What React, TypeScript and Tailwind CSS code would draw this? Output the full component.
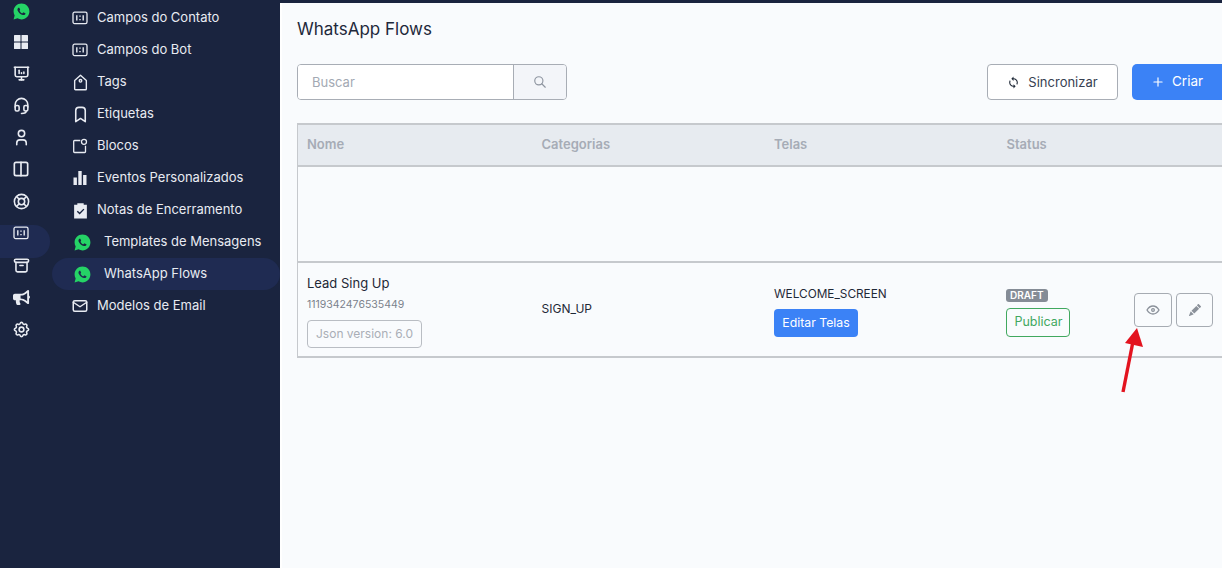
import React from "react";
import { RiWhatsappFill } from "react-icons/ri";
import { TbUser, TbLifebuoy, TbSettings, TbArchive, TbHeadset, TbPresentationAnalytics, TbMail, TbBookmark, TbSearch, TbPlus, TbEye, TbLayoutColumns } from "react-icons/tb";
import { FaBullhorn } from "react-icons/fa";
import { BsPencilFill } from "react-icons/bs";
import { MdLoop } from "react-icons/md";

const FieldsIcon = ({ size = 16 }: { size?: number }) => (
  <svg width={size} height={size} viewBox="0 0 16 16" fill="none" stroke="currentColor" strokeWidth="1.3">
    <rect x="1" y="2.2" width="14" height="11.4" rx="1.6" />
    <path d="M4.8 5.2v5.4M11.2 5.2v5.4" strokeWidth="1.4" />
    <path d="M8 5.6v1.2M8 9v1.2" strokeWidth="1.4" />
  </svg>
);
const TagIcon = () => (
  <svg width="17" height="17" viewBox="0 0 16 16" fill="none" stroke="currentColor" strokeWidth="1.3">
    <path d="M2.5 6.200 8 1.200l5.500 5V14a.8.8 0 0 1-.8.8H3.300a.8.8 0 0 1-.8-.8z" strokeLinejoin="round" />
    <circle cx="8" cy="6.400" r="1.200" />
  </svg>
);
const BlockIcon = () => (
  <svg width="16" height="16" viewBox="0 0 16 16" fill="none" stroke="currentColor" strokeWidth="1.3">
    <path d="M8.300 2.500H2.500a.8.8 0 0 0-.8.8v10.400a.8.8 0 0 0 .8.8h10.200a.8.8 0 0 0 .8-.8V7.800" />
    <circle cx="12" cy="3.800" r="2.500" />
  </svg>
);
const GridIcon = () => (
  <svg width="16" height="16" viewBox="0 0 16 16" fill="currentColor">
    <rect x="1" y="1" width="6.500" height="6.500" rx=".5" />
    <rect x="8.500" y="1" width="6.500" height="6.500" rx=".5" />
    <rect x="1" y="8.500" width="6.500" height="6.500" rx=".5" />
    <rect x="8.500" y="8.500" width="6.500" height="6.500" rx=".5" />
  </svg>
);
const BarsIcon = () => (
  <svg width="16" height="16" viewBox="0 0 16 16" fill="currentColor">
    <rect x="1.500" y="7.500" width="3.400" height="7.500" />
    <rect x="6.300" y="1" width="3.400" height="14" />
    <rect x="11.100" y="5" width="3.400" height="10" />
  </svg>
);
const ClipIcon = () => (
  <svg width="17" height="17" viewBox="0 0 16 16">
    <path d="M2 2.500h3V1.200h6v1.300h3v13H2z" fill="currentColor" />
    <path d="M5 8.700l2.200 2.200 4-4.200" stroke="#18233f" strokeWidth="1.300" fill="none" />
  </svg>
);

const rail = [
  { el: <RiWhatsappFill size={19} className="text-[#25d366]" />, h: "h-[22px] mb-[4px]" },
  { el: <GridIcon />, h: "h-[31px]" },
  { el: <TbPresentationAnalytics size={19} />, h: "h-[32px]" },
  { el: <TbHeadset size={19} />, h: "h-[32px]" },
  { el: <TbUser size={19} />, h: "h-[32px]" },
  { el: <TbLayoutColumns size={20} />, h: "h-[32px]" },
  { el: <TbLifebuoy size={19} />, h: "h-[32px]" },
  { el: <FieldsIcon />, h: "h-[32px]" },
  { el: <TbArchive size={19} />, h: "h-[32px]" },
  { el: <FaBullhorn size={17} />, h: "h-[32px]" },
  { el: <TbSettings size={19} />, h: "h-[32px]" },
];

const menu = [
  { icon: <FieldsIcon />, label: "Campos do Contato" },
  { icon: <FieldsIcon />, label: "Campos do Bot" },
  { icon: <TagIcon />, label: "Tags" },
  { icon: <TbBookmark size={19} />, label: "Etiquetas" },
  { icon: <BlockIcon />, label: "Blocos" },
  { icon: <BarsIcon />, label: "Eventos Personalizados" },
  { icon: <ClipIcon />, label: "Notas de Encerramento" },
  { icon: <RiWhatsappFill size={19} className="text-[#25d366]" />, label: "Templates de Mensagens", wa: true },
  { icon: <RiWhatsappFill size={19} className="text-[#25d366]" />, label: "WhatsApp Flows", wa: true, active: true },
  { icon: <TbMail size={18} />, label: "Modelos de Email" },
];

export default function App() {
  return (
    <div className="relative flex h-[568px] w-[1222px] overflow-hidden bg-[#f9fbfd] font-['Inter','Noto_Sans',sans-serif]">
      <aside className="flex h-full w-[280px] shrink-0 bg-[#1a243f] text-[#e8ebf2]">
        <nav className="relative flex w-[52px] shrink-0 flex-col">
          <div className="absolute left-0 top-[225px] h-[33px] w-[50px] rounded-r-[16px] bg-[#1f2b52]" />
          {rail.map((r, i) => (
            <div key={i} className={`relative flex w-[42px] shrink-0 items-center justify-center ${r.h}`}>
              {r.el}
            </div>
          ))}
        </nav>
        <ul className="flex flex-1 flex-col pt-[2px]">
          {menu.map((m) => (
            <li
              key={m.label}
              className={`flex h-[32px] items-center rounded-full text-[13px] ${m.active ? "bg-[#1f2b52]" : ""}`}
            >
              <span className={`flex w-[20px] items-center justify-center ${m.wa ? "ml-[20px] mr-[12px]" : "ml-[18px] mr-[7px]"}`}>
                {m.icon}
              </span>
              <span className="whitespace-nowrap pb-[1px] leading-none">{m.label}</span>
            </li>
          ))}
        </ul>
      </aside>
      <div className="h-full w-[2px] shrink-0 bg-[linear-gradient(#1a243f_0,#1a243f_3px,#ffffff_3px)]" />

      <main className="relative flex min-w-0 flex-1 flex-col">
        <div className="h-[3px] w-full shrink-0 bg-[#1a243f]" />
        <div className="flex flex-col pl-[15px]">
          <h1 className="mt-[16px] h-[20px] text-[17px] font-normal leading-[20px] text-[#1e293b]">WhatsApp Flows</h1>

          <div className="mt-[25px] flex h-[36px] items-stretch justify-between">
            <div className="flex w-[270px] overflow-hidden rounded-[4px] border border-[#a8adb5]">
              <div className="flex flex-1 items-center bg-white pl-[14px] pt-[2px] text-[13px] text-[#a3a9b3]">Buscar</div>
              <div className="flex w-[53px] items-center justify-center border-l border-[#a8adb5] bg-[#f3f5f9] text-[#8f96a1]">
                <TbSearch size={14} />
              </div>
            </div>
            <div className="flex gap-[14px]">
              <button className="flex w-[131px] items-center justify-center gap-[8px] rounded-[4px] border border-[#a8adb5] bg-white text-[13px] text-[#374151]">
                <MdLoop size={13} className="text-[#1f2937]" />
                <span className="pt-[2px]">Sincronizar</span>
              </button>
              <button className="flex w-[90px] items-center gap-[7px] rounded-l-[5px] bg-[#3b82f6] pl-[19px] text-[13.500px] text-white">
                <TbPlus size={14} />
                <span className="pb-[1px]">Criar</span>
              </button>
            </div>
          </div>

          <div className="mt-[23px] w-[925px] border-y-2 border-l border-[#c6c9cd]">
            <div className="flex h-[42px] items-center border-b-2 border-[#c6c9cd] bg-[#e7ebf0] pl-[9px] text-[13px] font-semibold text-[#a6acb6]">
              <div className="w-[234.500px]">Nome</div>
              <div className="w-[232.500px]">Categorias</div>
              <div className="w-[232.500px]">Telas</div>
              <div>Status</div>
            </div>
            <div className="h-[96px] border-b-2 border-[#c6c9cd]" />
            <div className="flex h-[93px] items-center pl-[9px] text-[12px] text-[#1f2937]">
              <div className="flex w-[234.500px] flex-col items-start pt-[4px]">
                <div className="text-[13px] leading-[16px]">Lead Sing Up</div>
                <div className="mt-[7px] text-[10.500px] leading-[14px] text-[#7b828c]">1119342476535449</div>
                <div className="mt-[8px] flex h-[28px] w-[115px] items-center justify-center rounded-[4px] border border-[#b9bdc3] text-[12px] text-[#a9aeb6]">
                  Json version: 6.0
                </div>
              </div>
              <div className="w-[232.500px] pb-[2px]">SIGN_UP</div>
              <div className="flex w-[232px] flex-col items-start pt-[5px]">
                <div className="text-[11.800px] leading-[14px]">WELCOME_SCREEN</div>
                <button className="mt-[8px] h-[28px] w-[84px] rounded-[4px] bg-[#3b82f6] text-[12.300px] text-white">Editar Telas</button>
              </div>
              <div className="flex w-[128px] flex-col items-start pt-[7px]">
                <span className="rounded-[3px] bg-[#858c96] px-[4px] text-[10px] font-semibold leading-[13px] text-white">DRAFT</span>
                <button className="mt-[6px] h-[29px] w-[64px] rounded-[4px] border border-[#41a85f] pl-[1px] text-[12.500px] text-[#41a85f]">Publicar</button>
              </div>
              <div className="flex gap-[4px]">
                <button className="flex h-[34px] w-[38px] items-center justify-center rounded-[4px] border border-[#a6abb2] text-[#8b919a]">
                  <TbEye size={16} />
                </button>
                <button className="flex h-[34px] w-[37px] items-center justify-center rounded-[4px] border border-[#a6abb2] text-[#8b919a]">
                  <BsPencilFill size={12} />
                </button>
              </div>
            </div>
          </div>
        </div>

        <svg className="absolute left-[838px] top-[326px]" width="24" height="70" viewBox="0 0 24 70">
          <path d="M3 66 12.500 18" stroke="#e3131f" strokeWidth="3.400" fill="none" />
          <path d="M17 2 5 17 23 21z" fill="#e3131f" />
        </svg>
      </main>
    </div>
  );
}
